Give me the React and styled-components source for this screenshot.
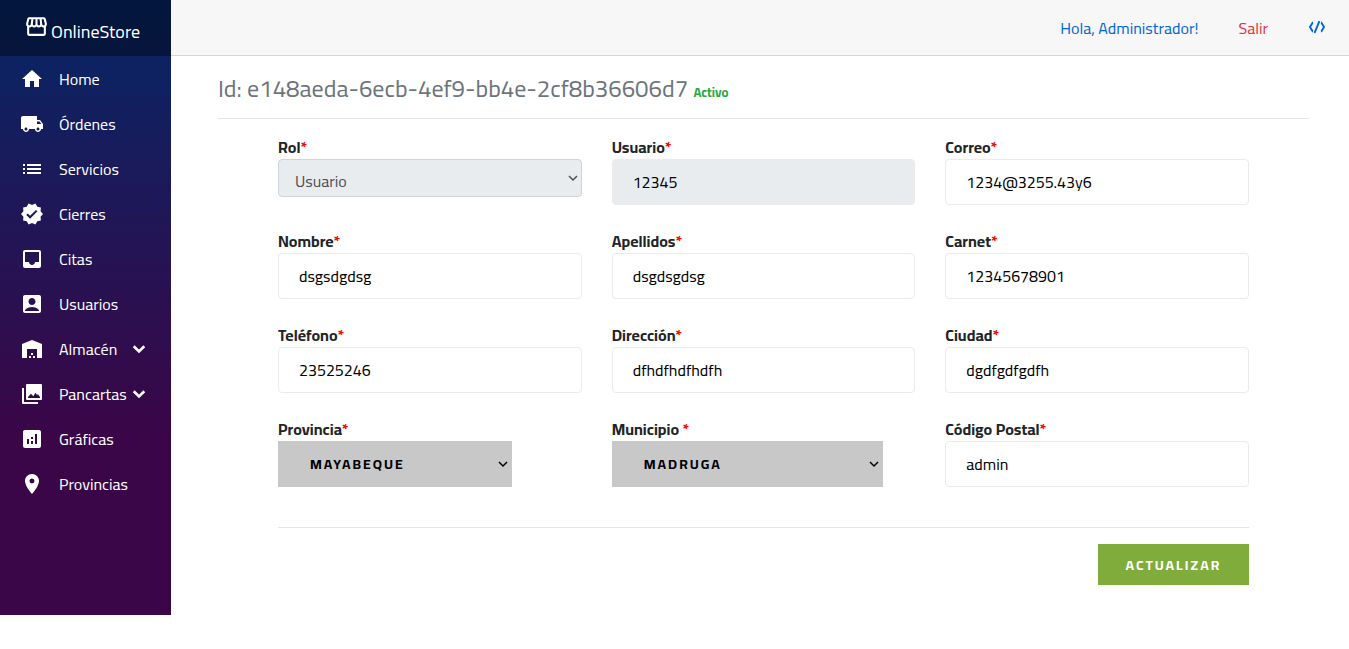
import React from "react";
import styled, { createGlobalStyle, css } from "styled-components";
import {
  MdHome, MdLocalShipping, MdList, MdVerified, MdInbox, MdAccountBox,
  MdWarehouse, MdAnalytics, MdLocationOn, MdOutlineStorefront,
} from "react-icons/md";

const GlobalStyle = createGlobalStyle`
  *, *::before, *::after { box-sizing: border-box; }
  body {
    margin: 0;
    background: #fff;
    color: #212529;
    font: 400 16px/24px Cairo, "Titillium Web", Roboto, sans-serif;
  }
  button, input, select { font-family: inherit; margin: 0; }
`;

const Page = styled.div`
  display: flex;
`;

const Sidebar = styled.aside`
  flex: 0 0 171px;
  background: linear-gradient(180deg, rgb(5, 39, 103) 0%, #3a0647 70%);
`;

const Brand = styled.a`
  display: flex;
  align-items: center;
  gap: 2px;
  height: 56px;
  padding-left: 24px;
  background: rgba(0, 0, 0, 0.4);
  color: #fff;
  font-size: 18px;
  text-decoration: none;
  span { padding-top: 8px; }
  svg { margin-bottom: 4px; }
`;

const Menu = styled.ul`
  list-style: none;
  margin: 0;
  padding: 0;
`;

const MenuLink = styled.a`
  display: flex;
  align-items: center;
  height: 45px;
  padding: 0 20px;
  color: #fff;
  text-decoration: none;
  svg { flex: none; }
`;

const MenuLabel = styled.span`
  flex: none;
  min-width: 68px;
  margin-left: 15px;
`;

const Main = styled.div`
  flex: 1;
  min-width: 0;
`;

const TopBar = styled.header`
  display: flex;
  align-items: center;
  justify-content: flex-end;
  gap: 40px;
  height: 56px;
  padding-right: 23px;
  background: #f7f7f7;
  border-bottom: 1px solid #d6d5d5;
`;

const TopLink = styled.a`
  display: flex;
  color: ${(p) => (p.$danger ? "#dc3545" : "#0366d6")};
  text-decoration: none;
`;

const Content = styled.main`
  padding: 18px 40px 30px 47px;
`;

const Title = styled.h1`
  margin: 0;
  padding-bottom: 11px;
  border-bottom: 1px solid #e5e5e5;
  color: #6c757d;
  font-size: 24px;
  font-weight: 400;
  line-height: 29px;
`;

const Status = styled.small`
  color: #28a745;
  font-size: 13px;
  font-weight: 700;
`;

const Form = styled.form`
  padding: 16px 60px 0;
`;

const Grid = styled.div`
  display: grid;
  grid-template-columns: repeat(3, 1fr);
  gap: 24px 30px;
`;

const Field = styled.div`
  display: flex;
  flex-direction: column;
  align-items: flex-start;
  height: 70px;
`;

const Label = styled.label`
  font-weight: 700;
  white-space: pre;
`;

const Required = styled.span`
  color: #f00;
`;

const Input = styled.input`
  width: 100%;
  height: 46px;
  padding: 0 20px;
  border: 1px solid #ebebeb;
  border-radius: 4px;
  background: #fff;
  color: #000;
  font-size: 16px;
  &:disabled { background: #e9ecef; }
`;

const SelectBox = styled.div`
  position: relative;
  width: ${(p) => p.$width};
  color: ${(p) => (p.$plain ? "#495057" : "#000")};
  svg {
    position: absolute;
    right: 4px;
    top: 50%;
    margin-top: -5px;
    pointer-events: none;
  }
`;

const Select = styled.select`
  display: block;
  appearance: none;
  width: 100%;
  color: inherit;
  ${(p) => p.$plain ? css`
    height: 38px;
    padding: 5px 16px 0 16px;
    border: 1px solid #ced4da;
    border-radius: 4px;
    background: #e9ecef;
    font-size: 16px;
    opacity: 1;
  ` : css`
    height: 46px;
    padding: 0 16px 0 32px;
    border: 0;
    border-radius: 0;
    background: #c8c8c8;
    font-size: 14px;
    font-weight: 700;
    letter-spacing: 2px;
    text-transform: uppercase;
  `}
`;

const Actions = styled.div`
  display: flex;
  justify-content: flex-end;
  margin-top: 40px;
  padding-top: 16px;
  border-top: 1px solid #e5e5e5;
`;

const Submit = styled.button`
  width: 151px;
  height: 41px;
  border: 0;
  background: #80ac3c;
  color: #fff;
  font-size: 14px;
  font-weight: 700;
  letter-spacing: 2px;
  text-transform: uppercase;
`;

const ChevronIcon = () => (
  <svg width="24" height="24" viewBox="0 0 24 24" fill="none" stroke="currentColor" strokeWidth="2.6" aria-hidden="true">
    <path d="M6.7 9.2 12 14.4l5.3-5.2" />
  </svg>
);

const SelectArrow = () => (
  <svg width="10" height="10" viewBox="0 0 10 10" fill="none" stroke="currentColor" strokeWidth="1.5" aria-hidden="true">
    <path d="M1 3l4 4 4-4" />
  </svg>
);

const GalleryIcon = () => (
  <svg width="24" height="24" viewBox="0 0 24 24" fill="currentColor" fillRule="evenodd" aria-hidden="true">
    <path d="M7 2h14a1 1 0 0 1 1 1v14a1 1 0 0 1-1 1H7a1 1 0 0 1-1-1V3a1 1 0 0 1 1-1zM8 16h12v-1l-2-2.8-1 .8-1.5-2.2-2.2 3.4-2.3-2.4L8 15z" />
    <path d="M2 6h2v14h14v2H3a1 1 0 0 1-1-1z" />
  </svg>
);

const CodeIcon = () => (
  <svg width="18" height="18" viewBox="0 0 18 18" fill="none" stroke="currentColor" strokeWidth="1.9" aria-hidden="true">
    <path d="M5 3.8H4.6L2 8l2.6 4.2H5M13 3.8h.4L16 8l-2.6 4.2H13M11.4 2.2 6.6 13.8" />
  </svg>
);

const menu = [
  ["Home", MdHome],
  ["Órdenes", MdLocalShipping],
  ["Servicios", MdList],
  ["Cierres", MdVerified],
  ["Citas", MdInbox],
  ["Usuarios", MdAccountBox],
  ["Almacén", MdWarehouse, true],
  ["Pancartas", GalleryIcon, true],
  ["Gráficas", MdAnalytics],
  ["Provincias", MdLocationOn],
];

const fields = [
  { id: "rol", label: "Rol", value: "Usuario", select: true, plain: true, width: "100%" },
  { id: "usuario", label: "Usuario", value: "12345", disabled: true },
  { id: "correo", label: "Correo", value: "1234@3255.43y6" },
  { id: "nombre", label: "Nombre", value: "dsgsdgdsg" },
  { id: "apellidos", label: "Apellidos", value: "dsgdsgdsg" },
  { id: "carnet", label: "Carnet", value: "12345678901" },
  { id: "telefono", label: "Teléfono", value: "23525246" },
  { id: "direccion", label: "Dirección", value: "dfhdfhdfhdfh" },
  { id: "ciudad", label: "Ciudad", value: "dgdfgdfgdfh" },
  { id: "provincia", label: "Provincia", value: "Mayabeque", select: true, width: "234px" },
  { id: "municipio", label: "Municipio ", value: "Madruga", select: true, width: "271px" },
  { id: "postal", label: "Código Postal", value: "admin" },
];

export default function App() {
  return (
    <>
      <GlobalStyle />
      <Page>
        <Sidebar>
          <Brand href="#">
            <MdOutlineStorefront size={25} />
            <span>OnlineStore</span>
          </Brand>
          <nav>
            <Menu>
              {menu.map(([name, Icon, expandable]) => (
                <li key={name}>
                  <MenuLink href="#">
                    <Icon size={24} />
                    <MenuLabel>{name}</MenuLabel>
                    {expandable && <ChevronIcon />}
                  </MenuLink>
                </li>
              ))}
            </Menu>
          </nav>
        </Sidebar>
        <Main>
          <TopBar>
            <TopLink href="#">Hola, Administrador!</TopLink>
            <TopLink href="#" $danger>Salir</TopLink>
            <TopLink href="#" aria-label="Código"><CodeIcon /></TopLink>
          </TopBar>
          <Content>
            <Title>Id: e148aeda-6ecb-4ef9-bb4e-2cf8b36606d7 <Status>Activo</Status></Title>
            <Form onSubmit={(e) => e.preventDefault()}>
              <Grid>
                {fields.map((f) => (
                  <Field key={f.id}>
                    <Label htmlFor={f.id}>{f.label}<Required>*</Required></Label>
                    {f.select ? (
                      <SelectBox $plain={f.plain} $width={f.width}>
                        <Select id={f.id} $plain={f.plain} disabled={f.plain}>
                          <option>{f.value}</option>
                        </Select>
                        <SelectArrow />
                      </SelectBox>
                    ) : (
                      <Input id={f.id} defaultValue={f.value} disabled={f.disabled} />
                    )}
                  </Field>
                ))}
              </Grid>
              <Actions>
                <Submit type="submit">Actualizar</Submit>
              </Actions>
            </Form>
          </Content>
        </Main>
      </Page>
    </>
  );
}
